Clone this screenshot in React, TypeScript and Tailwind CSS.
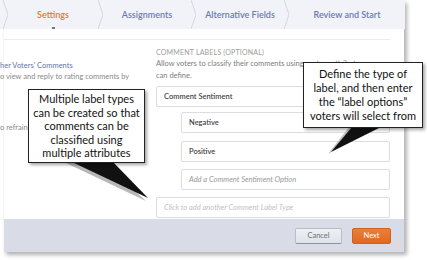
const tabs = [
  { label: 'Settings', w: 'w-[95px]', active: true },
  { label: 'Assignments', w: 'w-[93px]', active: false },
  { label: 'Alternative Fields', w: 'w-[93px]', active: false },
  { label: 'Review and Start', w: 'flex-1', active: false },
];

const Chevron = () => (
  <svg width="5" height="29" viewBox="0 0 5 29" className="shrink-0">
    <polyline points="0,0 5,14.5 0,29" fill="none" stroke="#d3d6e2" strokeWidth="1" />
  </svg>
);

const Field = ({ text, kind, indent }: { text: string; kind: 'value' | 'hint' | 'faint'; indent?: boolean }) => (
  <div
    className={`h-[21px] shrink-0 flex items-center px-[7px] bg-white border border-[#dcdde2] rounded-[2px] text-[7.5px] ${
      indent ? 'ml-[25px]' : ''
    } ${
      kind === 'value'
        ? 'text-[#444] font-semibold'
        : kind === 'hint'
        ? 'text-[#9a9a9a] italic'
        : 'text-[#c2c2c2] italic'
    }`}
  >
    {text}
  </div>
);

export default function App() {
  return (
    <div className="w-[427px] h-[260px] bg-white relative overflow-hidden font-['Lato',sans-serif]">
      <div className="ml-[4px] w-[401px] h-[252px] flex flex-col bg-white border-r border-[#bdbdbd] shadow-[2px_3px_4px_rgba(0,0,0,0.3)]">
        {/* step tabs */}
        <div className="-ml-[4px] w-[405px] h-[29px] shrink-0 bg-[#f2f3f8] flex relative">
          <div className="w-[3px]" />
          {tabs.map((t) => (
            <div key={t.label} className={`flex ${t.w}`}>
              <Chevron />
              <div
                className={`flex-1 flex items-center justify-center text-[9px] font-semibold ${
                  t.active ? 'text-[#e2782f]' : 'text-[#6b7bb0]'
                }`}
              >
                {t.label}
              </div>
            </div>
          ))}
          <div className="absolute left-[52px] top-[27px] w-[3px] h-[2px] bg-[#777]" />
        </div>

        <div className="h-[10px] shrink-0" />

        {/* body */}
        <div className="flex-1 min-h-0 flex mr-[14px] border-t border-[#e9eaef]">
          <div className="-ml-[4px] w-[156px] shrink-0 pt-[20px] text-[7.5px] leading-[11px] whitespace-nowrap">
            <div className="text-[#6474a8]">her Voters' Comments</div>
            <div className="text-[#8a8a8a]">o view and reply to rating comments by</div>
            <div className="text-[#8a8a8a] mt-[40px]">o refrain</div>
          </div>
          <div className="flex-1 min-h-0 overflow-hidden pt-[7px] flex flex-col">
            <div className="text-[7px] leading-[10px] text-[#9c9c9c] tracking-[0.2px]">COMMENT LABELS (OPTIONAL)</div>
            <div className="mt-[1px] text-[7.5px] leading-[12px] text-[#7d7d7d]">
              Allow voters to classify their comments using custom attributes you
              <br />
              can define.
            </div>
            <div className="mt-[4px]">
              <Field text="Comment Sentiment" kind="value" />
            </div>
            <div className="mt-[5px]">
              <Field text="Negative" kind="value" indent />
            </div>
            <div className="mt-[8px]">
              <Field text="Positive" kind="value" indent />
            </div>
            <div className="mt-[7px]">
              <Field text="Add a Comment Sentiment Option" kind="hint" indent />
            </div>
            <div className="mt-[7px] shrink-0">
              <Field text="Click to add another Comment Label Type" kind="faint" />
            </div>
          </div>
        </div>

        {/* footer */}
        <div className="h-[33px] shrink-0 bg-[#d9dce6] flex items-center justify-end gap-[10px] pr-[13px]">
          <button className="w-[47px] h-[16px] rounded-[2px] bg-gradient-to-b from-[#eef0f4] to-[#dfe2e9] border border-[#b9bdc8] border-b-[#8e929e] text-[7.5px] text-[#707070]">
            Cancel
          </button>
          <button className="w-[39px] h-[16px] rounded-[2px] bg-gradient-to-b from-[#ec7f35] to-[#df6a22] border border-[#d0621f] text-[7.5px] text-white">
            Next
          </button>
        </div>
      </div>

      {/* callout pointers */}
      <svg className="absolute inset-0 pointer-events-none" width="427" height="260" viewBox="0 0 427 260">
        <polygon points="66,163 104,163 146,201" fill="#b8b8b8" />
        <polygon points="72,162 113,162 148,198" fill="#111" />
        <polygon points="349,127 372,127 328,154" fill="#c0c0c0" />
        <polygon points="352,127 381,127 331,152" fill="#111" />
      </svg>

      {/* callouts */}
      <div className="absolute left-[28px] top-[89px] w-[117px] h-[74px] bg-white border-[1.5px] border-[#222] shadow-[2px_2px_3px_rgba(0,0,0,0.35)] flex flex-col items-center justify-center text-[11px] leading-[13.6px] text-[#111] text-center">
        <div>Multiple label types</div>
        <div>can be created so that</div>
        <div>comments can be</div>
        <div>classified using</div>
        <div>multiple attributes</div>
      </div>
      <div className="absolute left-[303px] top-[62px] w-[120px] h-[66px] bg-white border-[1.5px] border-[#222] shadow-[2px_2px_3px_rgba(0,0,0,0.35)] flex flex-col items-center justify-center text-[11px] leading-[14px] text-[#111] text-center">
        <div>Define the type of</div>
        <div>label, and then enter</div>
        <div>the “label options”</div>
        <div>voters will select from</div>
      </div>
    </div>
  );
}
